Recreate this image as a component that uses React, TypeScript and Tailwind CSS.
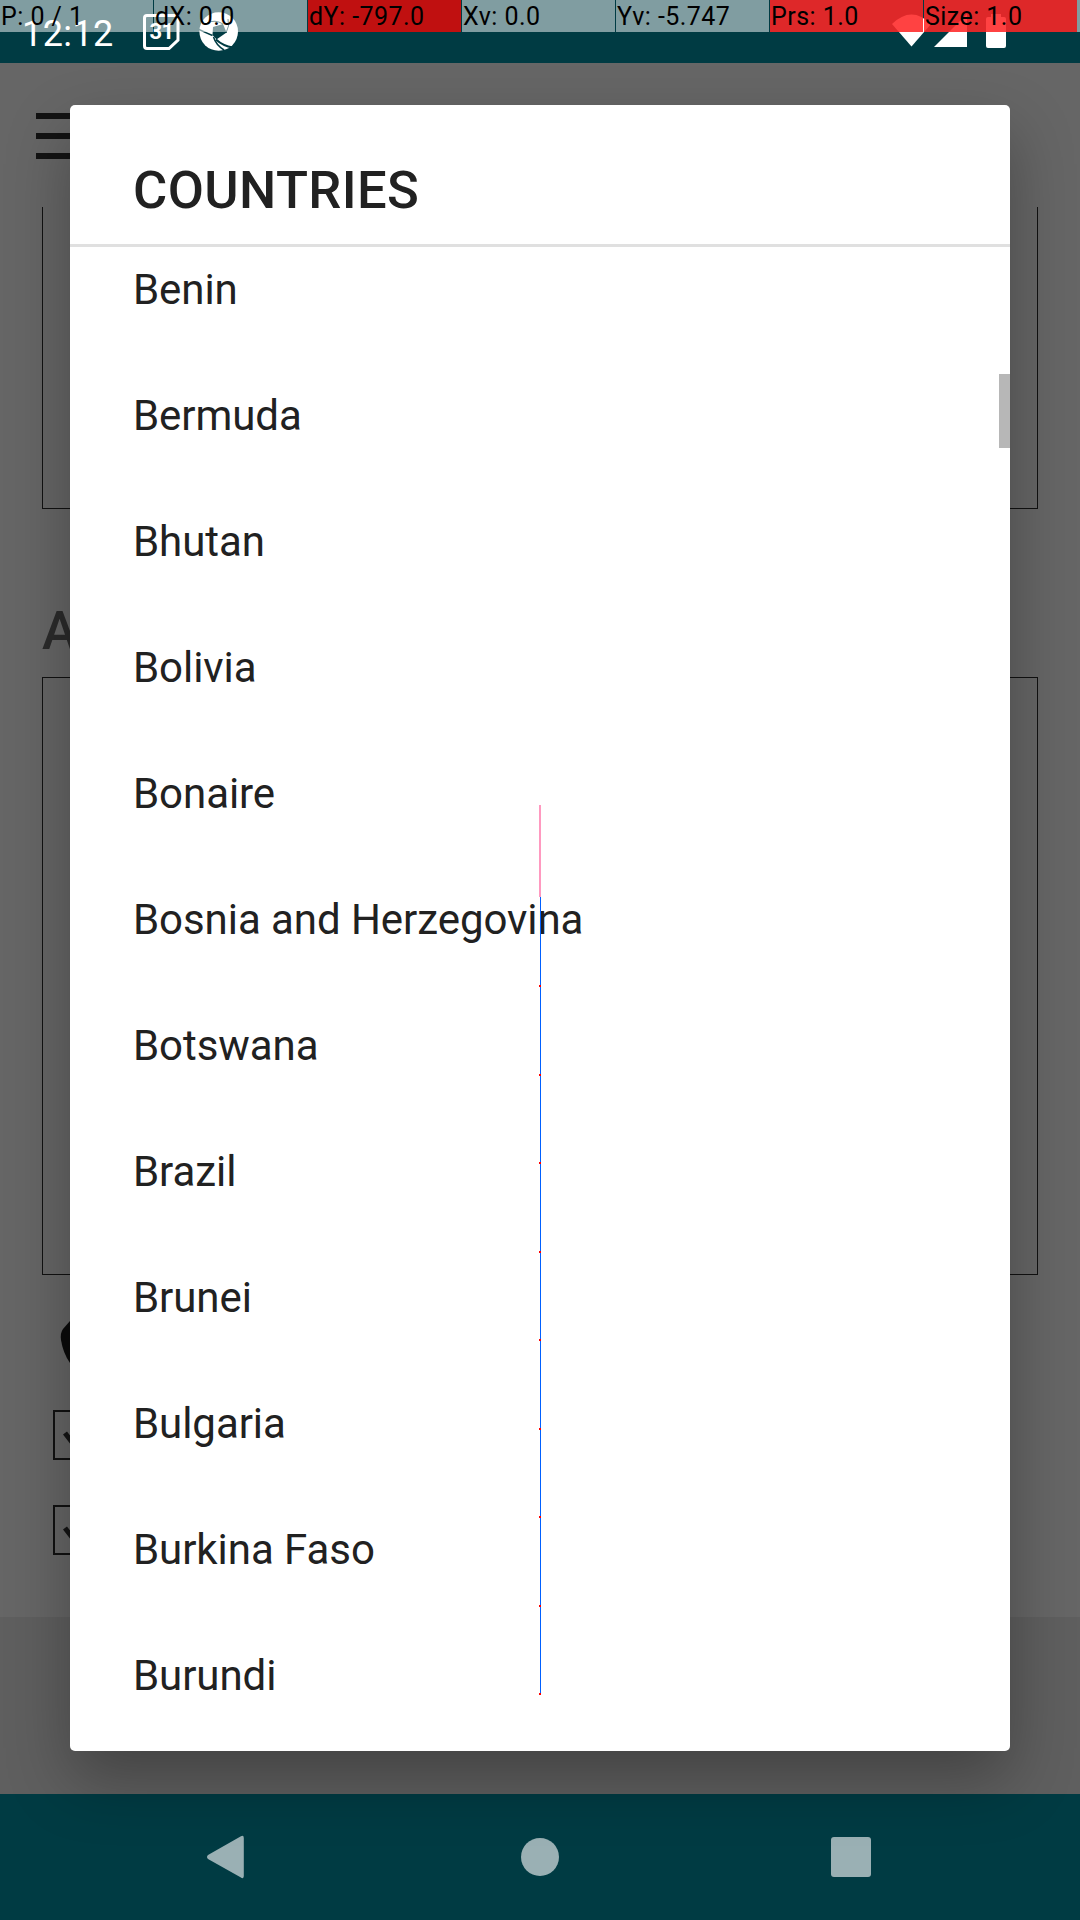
const countries = ["Benin","Bermuda","Bhutan","Bolivia","Bonaire","Bosnia and Herzegovina","Botswana","Brazil","Brunei","Bulgaria","Burkina Faso","Burundi"];

const readouts = [
  { text: "P: 0 / 1", hot: "" },
  { text: "dX: 0.0", hot: "" },
  { text: "dY: -797.0", hot: "bg-[#c01010]" },
  { text: "Xv: 0.0", hot: "" },
  { text: "Yv: -5.747", hot: "" },
  { text: "Prs: 1.0", hot: "bg-[#ff2626]/87" },
  { text: "Size: 1.0", hot: "bg-[#ff2626]/87" },
];

const touchSamples = [985, 1074, 1162, 1251, 1339, 1428, 1516, 1605, 1693];

function StatusBar() {
  return (
    <header className="flex h-[63px] shrink-0 items-start bg-[#003b43] text-white">
      <div className="ml-[22px] mt-[10px] w-[121px] text-[36px] leading-[48px] tracking-[0.4px]">12:12</div>
      <svg className="mt-[13px] h-[40px] w-[37px]" viewBox="0 0 37 40" fill="none">
        <path d="M4 2.500H32.500Q35 2.500 35 5V27L26 35.500H4Q1.500 35.500 1.500 33V5Q1.500 2.500 4 2.500Z" stroke="#fff" strokeWidth="3" />
        <text x="6.500" y="26" fill="#fff" fontFamily="Roboto" fontWeight="700" fontSize="22" letterSpacing="-0.500">31</text>
      </svg>
      <svg className="ml-[19px] mt-[12px] h-[40px] w-[40px]" viewBox="0 0 40 40">
        <circle cx="19.700" cy="19.500" r="19.300" fill="#fff" />
        <path d="M14 15L24 12L27.500 20.500L17.500 27.500L13.500 23Z" fill="#003b43" />
        <path d="M0 17.500Q7 21 13.500 23.500M14.500 25Q17 33 25 38" stroke="#003b43" strokeWidth="1.500" fill="none" />
        <path d="M17 27.500Q24 34 34 35.500" stroke="#003b43" strokeWidth="2" fill="none" />
        <path d="M27 21Q31 14 29 7M24 12Q16 7 8 11" stroke="#003b43" strokeWidth="1" fill="none" />
      </svg>
      <svg className="ml-auto mr-[73px] mt-[13px] h-[36px] w-[115px]" viewBox="0 0 115 36">
        <path d="M0 11Q19.500 -8 39 11L19.500 33.500Z" fill="#fff" />
        <path d="M42 34L75 1V34Z" fill="#fff" />
        <path d="M94 6Q94 4 96 4H99V1H109V4H112Q114 4 114 6V33Q114 35 112 35H96Q94 35 94 33Z" fill="#fff" />
      </svg>
    </header>
  );
}

function Checkbox() {
  return (
    <div className="ml-[53px] size-[50px] border-[2.500px] border-2 border-[#111] pl-2 pt-4">
      <svg className="h-6 w-8" viewBox="0 0 32 24" fill="none">
        <path d="M2 5L12 18L30 0" stroke="#141414" strokeWidth="5" />
      </svg>
    </div>
  );
}

function DimmedPage() {
  return (
    <main className="flex flex-1 flex-col bg-[#666] pt-[50px]">
      <div className="ml-9 flex w-[60px] flex-col gap-[14px]">
        <div className="h-[6px] bg-[#131313]" />
        <div className="h-[6px] bg-[#131313]" />
        <div className="h-[6px] bg-[#131313]" />
      </div>
      <div className="mx-[42px] mt-[48px] h-[302px] border border-t-0 border-[#111]" />
      <h2 className="ml-[42px] mt-[90px] h-[78px] text-[53px] font-medium leading-[64px] text-[#2b2b2b]">ADDRESS</h2>
      <div className="mx-[42px] h-[598px] border border-[#111]" />
      <svg className="ml-[60px] mt-10 h-[70px] w-[60px]" viewBox="0 0 60 70">
        <path d="M10 6L3 14Q0 18 1 25Q3 38 10 48L60 70V0H20Z" fill="#0b0b0b" />
      </svg>
      <div className="mt-[25px] flex flex-col gap-[45px]">
        <Checkbox />
        <Checkbox />
      </div>
      <div className="mt-auto h-[177px] bg-[#5f5f5f]" />
    </main>
  );
}

function NavigationBar() {
  return (
    <nav className="flex h-[126px] shrink-0 items-center justify-between bg-[#003b43] pl-[206px] pr-[209px]">
      <svg className="h-11 w-10" viewBox="0 0 40 44">
        <path d="M34.500 1.400Q37.800 -0.500 37.800 3V41Q37.800 44.500 34.500 42.300L2 24Q0 22 2 20Z" fill="#9ab0b4" />
      </svg>
      <div className="ml-[3px] size-[38px] rounded-full bg-[#9ab0b4]" />
      <div className="size-10 rounded-[3px] bg-[#9ab0b4]" />
    </nav>
  );
}

function CountryDialog() {
  return (
    <section className="absolute left-[70px] top-[105px] flex h-[1646px] w-[940px] flex-col overflow-hidden rounded-[5px] bg-white text-[#212121]">
      <h1 className="h-[142px] shrink-0 border-b-[3px] border-[#e0e0e0] pl-[63px] pt-[53px] text-[52.5px] font-medium leading-[64px] tracking-[0.4px]">COUNTRIES</h1>
      <ul className="-mt-[20px] flex flex-col">
        {countries.map((name) => (
          <li key={name} className="flex h-[126px] items-center pl-[63px] text-[42px] leading-none tracking-[-0.06px]">{name}</li>
        ))}
      </ul>
      <div className="absolute right-0 top-[269px] h-[74px] w-[11px] bg-[#b7b7b7]" />
    </section>
  );
}

function PointerOverlay() {
  return (
    <div className="pointer-events-none absolute inset-0">
      <div className="flex h-8 gap-px text-[25px] leading-[34px] tracking-[0.45px] text-black">
        {readouts.map((r) => (
          <div key={r.text} className={`w-[153px] shrink-0 whitespace-nowrap pl-px ${r.hot || "bg-white/50"}`}>{r.text}</div>
        ))}
        <div className="-ml-px flex-1 bg-white/50" />
      </div>
      <svg className="absolute left-[539px] top-0 h-[1920px] w-[2px]" viewBox="0 0 2 1920" shapeRendering="crispEdges">
        <rect x="0" y="805" width="2" height="92" fill="#ff99c0" />
        <rect x="1" y="897" width="1" height="797" fill="#0060ff" />
        {touchSamples.map((y) => (
          <rect key={y} x="0" y={y} width="2" height="2" fill="#ff0000" />
        ))}
      </svg>
    </div>
  );
}

export default function App() {
  return (
    <div className="relative flex h-[1920px] w-[1080px] flex-col overflow-hidden font-['Roboto',sans-serif]">
      <StatusBar />
      <DimmedPage />
      <NavigationBar />
      <div className="absolute left-[70px] top-[105px] h-[1646px] w-[940px] rounded-[5px] shadow-[0_28px_64px_rgba(0,0,0,0.3)]" />
      <CountryDialog />
      <PointerOverlay />
    </div>
  );
}
